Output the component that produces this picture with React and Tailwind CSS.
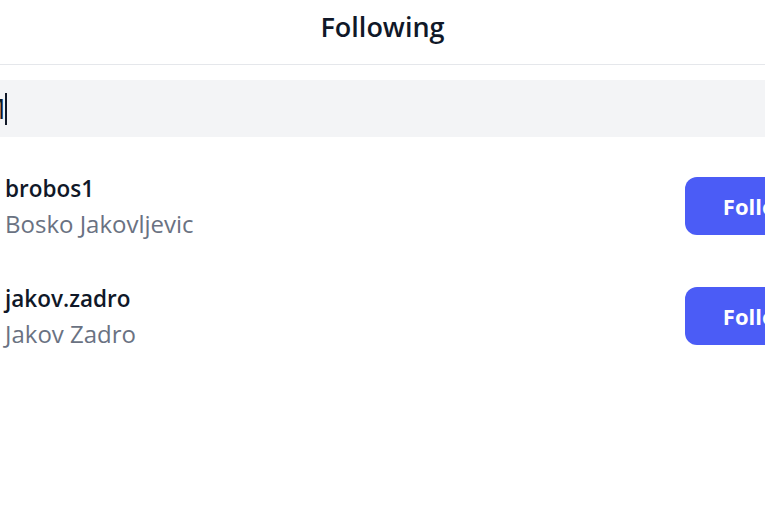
import React from "react";

const following = [
  { username: "brobos1", name: "Bosko Jakovljevic" },
  { username: "jakov.zadro", name: "Jakov Zadro" },
];

export default function App() {
  return (
    <div className="w-full h-[510px] overflow-hidden bg-white" style={{ fontFamily: '"Open Sans", "Noto Sans", sans-serif' }}>
      <div className="-ml-[40px] w-[calc(100%+80px)]">
        {/* Header */}
        <div className="h-[65px] border-b border-gray-200 flex items-center justify-center">
          <h1 className="text-[27px] font-semibold text-gray-900 pb-[10px]">Following</h1>
        </div>

        {/* Search */}
        <div className="mt-[15px] h-[57px] bg-gray-100 flex items-center pl-[21px]">
          <span className="text-[27px] text-gray-900 leading-none">M</span>
          <span className="w-[2px] h-[32px] bg-gray-900"></span>
        </div>

        {/* List */}
        <div className="pt-[14px] px-[45px]">
          {following.map((u) => (
            <div key={u.username} className="h-[110px] flex items-center justify-between">
              <div>
                <div className="text-[22.5px] font-semibold text-gray-900 leading-[35px]">{u.username}</div>
                <div className="text-[24px] text-gray-500 leading-[35px]">{u.name}</div>
              </div>
              <button className="h-[58px] px-[38px] rounded-[12px] bg-[#4b5cf6] text-white text-[22px] font-bold mr-[-106px]">
                Following
              </button>
            </div>
          ))}
        </div>
      </div>
    </div>
  );
}
